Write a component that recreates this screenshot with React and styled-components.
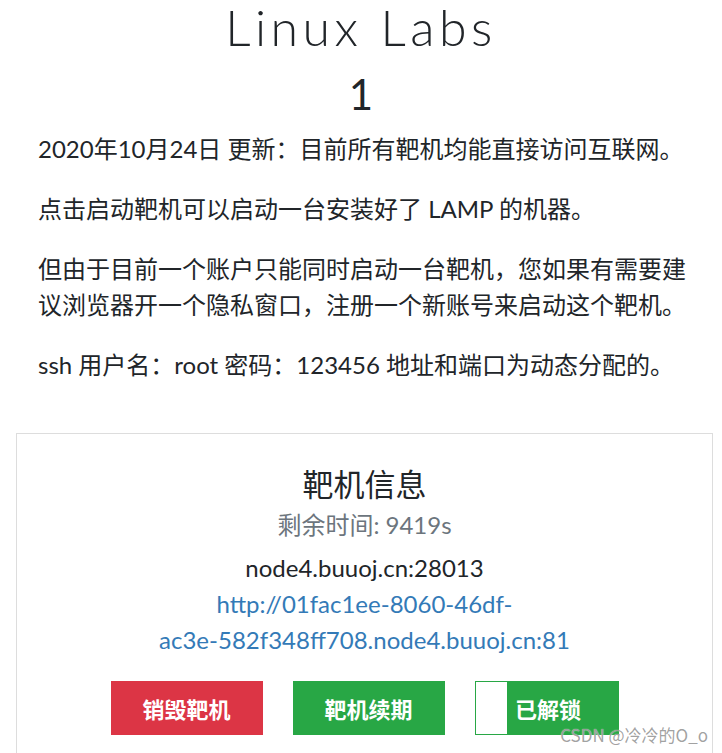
import React from "react";
import styled, { createGlobalStyle } from "styled-components";

const Global = createGlobalStyle`
  html, body { margin: 0; padding: 0; background: #fff; }
  body {
    font-family: Lato, "Noto Sans CJK SC", sans-serif;
    color: #212529;
  }
`;

const Page = styled.div`
  position: relative;
  width: 722px;
  height: 753px;
  overflow: hidden;
`;

const Title = styled.h1`
  margin: 0;
  text-align: center;
  font-family: Lato, sans-serif;
  font-weight: 300;
  font-size: 50px;
  line-height: 54px;
  letter-spacing: 4.5px;
  color: #212529;
`;

const Number = styled.h2`
  margin: 15px 0 0;
  text-align: center;
  font-weight: 400;
  font-size: 42px;
  line-height: 1.2;
`;

const Content = styled.div`
  padding: 12px 24px 0 38px;
`;

const Para = styled.p`
  margin: 0 0 24px;
  font-size: 24px;
  line-height: 1.5;
`;

const Card = styled.section`
  margin: 50px 9px 0 16px;
  border: 1px solid #dddddd;
  padding: 32px 16px 40px;
  text-align: center;
`;

const CardTitle = styled.h3`
  margin: 0;
  font-size: 31px;
  font-weight: 400;
  line-height: 1.2;
`;

const Remain = styled.div`
  margin-top: 3px;
  font-size: 24px;
  line-height: 1.5;
  color: #6c757d;
`;

const Host = styled.div`
  margin-top: 7px;
  font-size: 24px;
  line-height: 1.5;
  color: #212529;
`;

const Link = styled.a`
  display: block;
  font-size: 24px;
  line-height: 1.5;
  color: #337ab7;
  text-decoration: none;
`;

const Seg = styled.span`
  white-space: nowrap;
`;

const Actions = styled.div`
  margin-top: 23px;
  display: flex;
  justify-content: center;
  gap: 30px;
`;

const Button = styled.button`
  width: ${(p) => p.$w || 152}px;
  height: 54px;
  border: none;
  margin: 0;
  padding: 0;
  background: ${(p) => p.$bg};
  color: #fff;
  font-family: Lato, "Noto Sans CJK SC", sans-serif;
  font-size: 22px;
  font-weight: 700;
  cursor: pointer;
`;

const Toggle = styled.div`
  width: 144px;
  height: 54px;
  box-sizing: border-box;
  border: 1px solid #28a745;
  display: flex;
`;

const ToggleKnob = styled.span`
  width: 31px;
  background: #fff;
`;

const ToggleLabel = styled.span`
  flex: 1;
  background: #28a745;
  color: #fff;
  font-size: 22px;
  font-weight: 700;
  display: flex;
  align-items: center;
  justify-content: center;
  padding-right: 28px;
`;

const Watermark = styled.div`
  position: absolute;
  right: 14px;
  bottom: 8px;
  font-family: "Noto Sans CJK SC", sans-serif;
  font-size: 17px;
  line-height: 20px;
  color: rgba(120, 120, 120, 0.7);
  text-shadow: 0 0 1px #fff;
`;

export default function App() {
  return (
    <Page>
      <Global />
      <Title>Linux Labs</Title>
      <Number>1</Number>
      <Content>
        <Para>2020年10月24日 更新：目前所有靶机均能直接访问互联网。</Para>
        <Para>点击启动靶机可以启动一台安装好了 LAMP 的机器。</Para>
        <Para>
          但由于目前一个账户只能同时启动一台靶机，您如果有需要建议浏览器开一个隐私窗口，注册一个新账号来启动这个靶机。
        </Para>
        <Para>ssh 用户名：root 密码：123456 地址和端口为动态分配的。</Para>
      </Content>
      <Card>
        <CardTitle>靶机信息</CardTitle>
        <Remain>剩余时间: 9419s</Remain>
        <Host>node4.buuoj.cn:28013</Host>
        <Link href="#">
          <Seg>http://01fac1ee-8060-46df-</Seg>
          <wbr />
          <Seg>ac3e-582f348ff708.node4.buuoj.cn:81</Seg>
        </Link>
        <Actions>
          <Button $bg="#dc3545">销毁靶机</Button>
          <Button $bg="#28a745">靶机续期</Button>
          <Toggle>
            <ToggleKnob />
            <ToggleLabel>已解锁</ToggleLabel>
          </Toggle>
        </Actions>
      </Card>
      <Watermark>CSDN @冷冷的O_o</Watermark>
    </Page>
  );
}
